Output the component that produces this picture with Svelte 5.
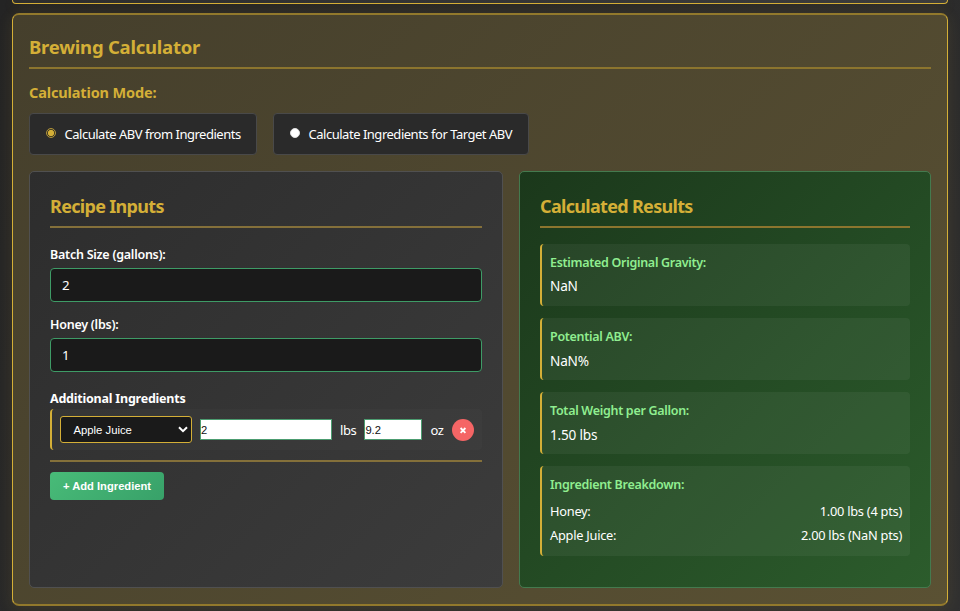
<script>
  let mode = $state('abv');
  let batch = $state('2');
  let honey = $state('1');
  let pounds = $state('2');
  let ounces = $state('9.2');
  const results = [
    { label: 'Estimated Original Gravity:', value: 'NaN' },
    { label: 'Potential ABV:', value: 'NaN%' },
    { label: 'Total Weight per Gallon:', value: '1.50 lbs' }
  ];
  const breakdown = [
    { name: 'Honey:', amount: '1.00 lbs (4 pts)' },
    { name: 'Apple Juice:', amount: '2.00 lbs (NaN pts)' }
  ];
</script>

<main>
  <div class="previous"></div>
  <section class="card">
    <h2>Brewing Calculator</h2>
    <h3>Calculation Mode:</h3>
    <div class="modes">
      <label class="mode first"><input type="radio" value="abv" bind:group={mode} /><span>Calculate ABV from Ingredients</span></label>
      <label class="mode second"><input type="radio" value="target" bind:group={mode} /><span>Calculate Ingredients for Target ABV</span></label>
    </div>
    <div class="columns">
      <div class="panel inputs">
        <h2>Recipe Inputs</h2>
        <label class="field"><span>Batch Size (gallons):</span><input bind:value={batch} /></label>
        <label class="field"><span>Honey (lbs):</span><input bind:value={honey} /></label>
        <h4>Additional Ingredients</h4>
        <div class="ingredient">
          <button class="select">Apple Juice
            <svg width="10" height="7" viewBox="0 0 10 7"><path d="M1 1.2 5 5.2 9 1.2" fill="none" stroke="#fff" stroke-width="2" /></svg>
          </button>
          <input class="lbs" bind:value={pounds} />
          <span class="unit">lbs</span>
          <input class="oz" bind:value={ounces} />
          <span class="unit">oz</span>
          <button class="remove" aria-label="Remove"><svg width="8" height="8" viewBox="0 0 8 8"><path d="M1.6 2 6.4 6.8M6.4 2 1.6 6.8" stroke="#fff" stroke-width="1.8" /></svg></button>
        </div>
        <hr />
        <button class="add">+ Add Ingredient</button>
      </div>
      <div class="panel results">
        <h2>Calculated Results</h2>
        {#each results as item}
          <div class="result">
            <strong>{item.label}</strong>
            <div class="value">{item.value}</div>
          </div>
        {/each}
        <div class="result last">
          <strong>Ingredient Breakdown:</strong>
          {#each breakdown as row}
            <div class="row"><span>{row.name}</span><span>{row.amount}</span></div>
          {/each}
        </div>
      </div>
    </div>
  </section>
</main>

<style>
  :global(body) { margin: 0; background: #232323; overflow: hidden; }
  * { box-sizing: border-box; }
  main {
    height: 611px; padding: 0 12px; overflow: hidden;
    display: flex; flex-direction: column;
    background: linear-gradient(135deg, #242424, #303030);
    color: #fff; font-family: "Segoe UI", "Noto Sans", "Open Sans", sans-serif;
  }
  h2, h3, h4 { margin: 0; font-weight: 700; color: #d4af37; white-space: nowrap; }
  .previous {
    flex: none; height: 4px; margin-bottom: 9px;
    border: 1px solid #d4af37; border-top: 0; border-radius: 0 0 6px 6px;
    background: linear-gradient(90deg, #2d2d2d, #3c3c3c);
    box-shadow: 0 3px 15px rgba(212, 175, 55, 0.1);
  }
  .card {
    flex: none; height: 593px; padding: 14px 16px;
    border: 1px solid #d4af37; border-width: 2px 1px; border-radius: 7px;
    border-top-color: #92792c; border-bottom-color: #92792c;
    background: linear-gradient(135deg, #453f2c, #5a5133);
    box-shadow: 0 3px 15px rgba(212, 175, 55, 0.12);
  }
  h2 { height: 40px; font-size: 18.5px; line-height: 35px; letter-spacing: -0.23px; border-bottom: 2px solid #8c752e; }
  h3 { height: 44px; padding-top: 12px; font-size: 14.5px; line-height: 22px; letter-spacing: -0.13px; }
  .modes { display: flex; gap: 16px; height: 42px; }
  .mode {
    display: flex; align-items: center; padding: 0 0 0 16px;
    border: 1px solid #494949; border-radius: 4px; background: #2a2a2a;
    font-size: 13px; letter-spacing: -0.48px; white-space: nowrap;
  }
  .first { width: 228px; }
  .second { width: 256px; }
  .mode input {
    appearance: none; flex: none; width: 10px; height: 10px; margin: 0 8.5px 2px 0;
    border-radius: 50%; background: #fff; border: 1px solid #ddd;
  }
  .mode input:checked { border-color: #b3963b; background: radial-gradient(circle, #d4af37 0 2.8px, #403820 3.4px); }
  .columns { display: grid; grid-template-columns: 474px 412px; gap: 16px; height: 417px; margin-top: 16px; }
  .panel { padding: 15px 20px; border: 1px solid #505050; border-radius: 5px; }
  .panel h2 { height: 41px; line-height: 38px; font-size: 18px; letter-spacing: -0.68px; margin-bottom: 15px; }
  .inputs { background: linear-gradient(135deg, #2d2d2d, #3c3c3c); }
  .panel.inputs h2 { border-color: #84703a; }
  .results { background: linear-gradient(135deg, #1b381b, #2c5c2c); border-color: #447a4e; }
  .panel.results h2 { margin-bottom: 16px; }
  .field { display: block; height: 70px; font-size: 12.5px; font-weight: 600; line-height: 24px; letter-spacing: -0.25px; }
  .field span { display: block; height: 25px; }
  .field input {
    display: block; width: 100%; height: 34px; padding: 0 11px;
    border: 1px solid #3e9b66; border-radius: 4px; background: #1a1a1a; color: #fff;
    font: 13.3px "Noto Sans", sans-serif; outline: 0;
  }
  h4 { height: 26px; padding-top: 5px; color: #fff; font-size: 12.5px; line-height: 22px; letter-spacing: -0.22px; }
  .ingredient {
    display: flex; align-items: center; height: 41px; padding: 0 8px;
    border-left: 2px solid #d4af37; border-radius: 4px; background: rgba(255, 255, 255, 0.02);
  }
  button { font-family: "Liberation Sans", sans-serif; border: 0; color: #fff; padding: 0; }
  .select {
    display: flex; align-items: center; justify-content: space-between; flex: none;
    width: 132px; height: 27px; padding: 0 3px 0 12.5px; font-size: 11.3px;
    border: 1px solid #d4af37; border-radius: 3px; background: #1a1a1a;
  }
  .ingredient input {
    height: 21px; padding: 0; border: 1px solid #4c9c70; background: #fff; color: #111;
    font: 11.2px "Liberation Sans", sans-serif; outline: 0; border-radius: 0;
  }
  .ingredient .lbs { width: 132px; margin-left: 8px; }
  .ingredient .oz { width: 58px; }
  .unit { flex: none; margin: 1px 8px 0; font-size: 13px; letter-spacing: -0.4px; }
  .remove { display: flex; align-items: center; justify-content: center; flex: none; width: 22px; height: 22px; margin-left: auto; border-radius: 50%; background: #f56565; }
  hr { height: 2px; margin: 10px 0; border: 0; background: #84703a; }
  .add { display: block; width: 114px; height: 28px; border-radius: 4px; background: linear-gradient(135deg, #48bb78, #38a169); font-size: 11.2px; font-weight: 700; }
  .result {
    height: 62px; margin-bottom: 12px; padding: 7px 8px 0;
    border-left: 2px solid #d4af37; border-radius: 4px; background: rgba(255, 255, 255, 0.05);
  }
  .result strong { display: block; height: 24px; color: #90ee90; font-size: 12.5px; font-weight: 600; line-height: 24px; letter-spacing: -0.3px; }
  .value { line-height: 24px; font-size: 13.6px; letter-spacing: -0.2px; }
  .result:nth-child(2) .value { line-height: 22px; }
  .last { height: 90px; margin: 0; }
  .row { display: flex; justify-content: space-between; line-height: 24px; font-size: 12.8px; letter-spacing: -0.25px; }
  .row:nth-child(2) { margin-top: 2px; }
</style>
